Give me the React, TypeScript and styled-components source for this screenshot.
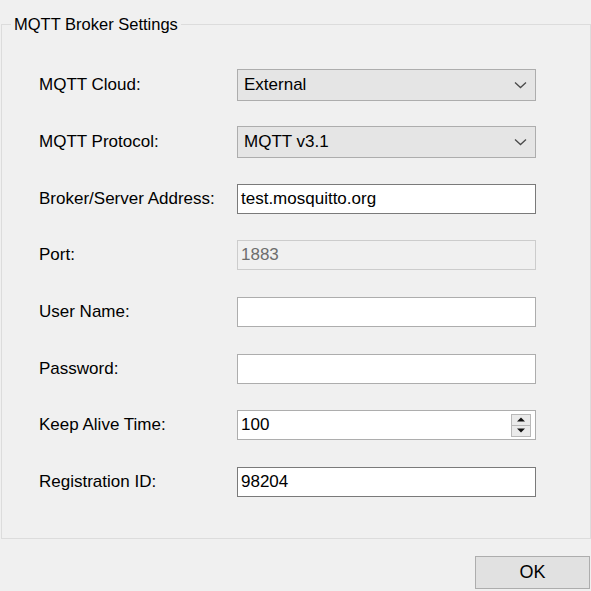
import React from 'react';
import styled, { createGlobalStyle } from 'styled-components';

const GlobalStyle = createGlobalStyle`
  html, body {
    margin: 0;
    padding: 0;
    background: #f0f0f0;
  }
  body {
    width: 591px;
    height: 591px;
    overflow: hidden;
    font-family: 'Liberation Sans', Arial, sans-serif;
    color: #000;
  }
`;

const Window = styled.main`
  display: flex;
  flex-direction: column;
  width: 591px;
  height: 591px;
  box-sizing: border-box;
  padding: 15px 1px 0 1px;
`;

const GroupBox = styled.fieldset`
  margin: 0;
  width: 590px;
  box-sizing: border-box;
  border: 1px solid #dcdcdc;
  padding: 0;
`;

const GroupTitle = styled.legend`
  margin-left: 9px;
  padding: 0 3px 0 3px;
  font-size: 16.5px;
  line-height: 18px;
`;

const FormGrid = styled.div`
  display: grid;
  grid-template-columns: 198px 299px;
  grid-auto-rows: 56.7px;
  align-items: center;
  padding: 24px 0 27px 37px;
`;

const Label = styled.span`
  font-size: 17px;
  line-height: 20px;
`;

const Combo = styled.div`
  display: flex;
  align-items: center;
  justify-content: space-between;
  height: 32px;
  box-sizing: border-box;
  padding: 0 8px 0 6px;
  background: #e5e5e5;
  border: 1px solid #adadad;
  font-size: 17px;
`;

const TextBox = styled.div<{ $disabled?: boolean; $focused?: boolean }>`
  display: flex;
  align-items: center;
  height: 30px;
  box-sizing: border-box;
  padding: 0 3px;
  font-size: 17px;
  background: ${(p) => (p.$disabled ? '#f0f0f0' : '#ffffff')};
  color: ${(p) => (p.$disabled ? '#6d6d6d' : '#000')};
  border: 1px solid
    ${(p) => (p.$disabled ? '#cccccc' : p.$focused ? '#7a7a7a' : '#adadad')};
`;

const SpinField = styled(TextBox)`
  justify-content: space-between;
  padding-right: 4px;
`;

const SpinButtons = styled.div`
  display: flex;
  flex-direction: column;
  width: 20px;
  height: 23px;
`;

const SpinButton = styled.div`
  flex: 1;
  display: flex;
  align-items: center;
  justify-content: center;
  background: #eaeaea;
  border: 1px solid #b8b8b8;
  & + & {
    border-top: none;
  }
`;

const Footer = styled.div`
  display: flex;
  justify-content: flex-end;
  padding-top: 17px;
`;

const OkButton = styled.button`
  width: 115px;
  height: 33px;
  box-sizing: border-box;
  background: #e1e1e1;
  border: 1px solid #adadad;
  font-family: inherit;
  font-size: 18px;
  color: #000;
  padding: 0;
`;

const Chevron = () => (
  <svg width="13" height="8" viewBox="0 0 13 8">
    <path d="M1 1.5 L6.5 6.5 L12 1.5" fill="none" stroke="#4a4a4a" strokeWidth="1.3" />
  </svg>
);

const Arrow = ({ up }: { up?: boolean }) => (
  <svg width="8" height="5" viewBox="0 0 8 5">
    <path d={up ? 'M0 4.5 L4 0.5 L8 4.5 Z' : 'M0 0.5 L8 0.5 L4 4.5 Z'} fill="#111" />
  </svg>
);

export default function App(): JSX.Element {
  return (
    <>
      <GlobalStyle />
      <Window>
        <GroupBox>
          <GroupTitle>MQTT Broker Settings</GroupTitle>
          <FormGrid>
            <Label>MQTT Cloud:</Label>
            <Combo>
              <span>External</span>
              <Chevron />
            </Combo>

            <Label>MQTT Protocol:</Label>
            <Combo>
              <span>MQTT v3.1</span>
              <Chevron />
            </Combo>

            <Label>Broker/Server Address:</Label>
            <TextBox $focused>test.mosquitto.org</TextBox>

            <Label>Port:</Label>
            <TextBox $disabled>1883</TextBox>

            <Label>User Name:</Label>
            <TextBox />

            <Label>Password:</Label>
            <TextBox />

            <Label>Keep Alive Time:</Label>
            <SpinField>
              <span>100</span>
              <SpinButtons>
                <SpinButton>
                  <Arrow up />
                </SpinButton>
                <SpinButton>
                  <Arrow />
                </SpinButton>
              </SpinButtons>
            </SpinField>

            <Label>Registration ID:</Label>
            <TextBox $focused>98204</TextBox>
          </FormGrid>
        </GroupBox>
        <Footer>
          <OkButton>OK</OkButton>
        </Footer>
      </Window>
    </>
  );
}
